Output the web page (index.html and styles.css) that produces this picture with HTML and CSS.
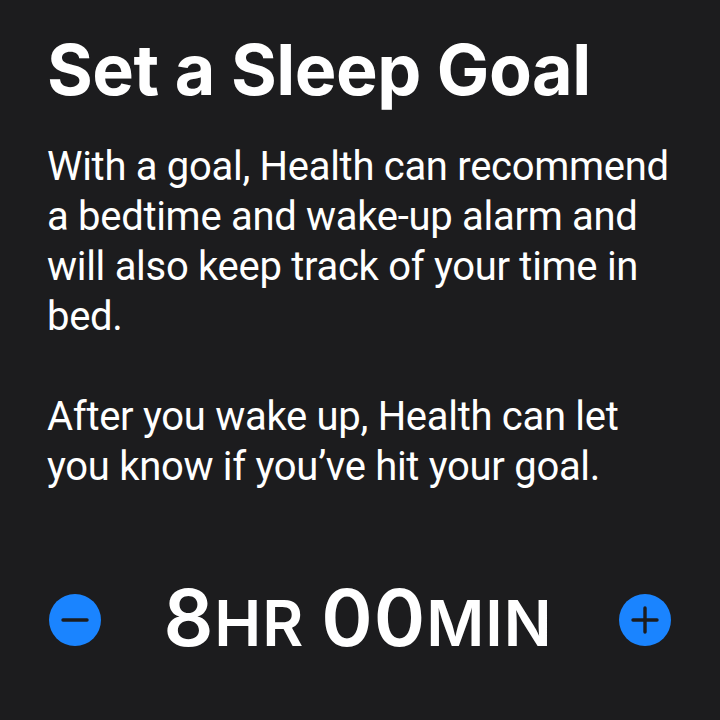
FILE: index.html
```html
<!DOCTYPE html>
<html lang="en">
<head>
<meta charset="utf-8">
<title>Sleep Goal</title>
<link rel="stylesheet" href="styles.css">
</head>
<body>
<main class="screen">
  <h1 class="title">Set a Sleep Goal</h1>
  <p class="copy">With a goal, Health can recommend a bedtime and wake-up alarm and will also keep track of your time in bed.</p>
  <p class="copy copy-last">After you wake up, Health can let you know if you’ve hit your goal.</p>

  <div class="stepper">
    <button class="step-btn" type="button" aria-label="Decrease">
      <svg viewBox="0 0 52 52" width="52" height="52">
        <circle cx="26" cy="26" r="26" fill="#1a84ff"/>
        <path d="M14 26h24" stroke="#1c1c1e" stroke-width="3.4" stroke-linecap="round"/>
      </svg>
    </button>
    <div class="duration">
      <span class="num">8</span><span class="unit">hr</span> <span class="num">00</span><span class="unit">min</span>
    </div>
    <button class="step-btn" type="button" aria-label="Increase">
      <svg viewBox="0 0 52 52" width="52" height="52">
        <circle cx="26" cy="26" r="26" fill="#1a84ff"/>
        <path d="M14 26h24M26 14v24" stroke="#1c1c1e" stroke-width="3.4" stroke-linecap="round"/>
      </svg>
    </button>
  </div>
</main>
</body>
</html>
```

FILE: styles.css
```css
html, body {
  margin: 0;
  padding: 0;
  background: #1c1c1e;
}

.screen {
  width: 720px;
  height: 720px;
  box-sizing: border-box;
  padding: 28px 30px 0 47px;
  color: #ffffff;
  font-family: Inter, "Helvetica Neue", Arial, sans-serif;
  overflow: hidden;
}

.title {
  margin: 0;
  font-size: 70px;
  line-height: 84px;
  font-weight: 700;
  letter-spacing: -0.5px;
}

.copy {
  margin: 30px 0 0;
  font-family: Roboto, "Helvetica Neue", Arial, sans-serif;
  font-size: 40px;
  line-height: 50px;
  font-weight: 400;
  letter-spacing: -0.3px;
}

.copy-last {
  margin-top: 50px;
}

.stepper {
  margin: 102px -30px 0 2px;
  padding-right: 49px;
  display: flex;
  align-items: center;
  justify-content: space-between;
  height: 52px;
}

.step-btn {
  width: 52px;
  height: 52px;
  padding: 0;
  border: 0;
  background: none;
  display: block;
}

.step-btn svg {
  display: block;
}

.duration {
  font-size: 63px;
  line-height: 52px;
  font-weight: 600;
  letter-spacing: 1px;
  white-space: nowrap;
  margin-right: 4px;
}

.num {
  font-size: 78px;
}

.unit {
  text-transform: uppercase;
}
```
